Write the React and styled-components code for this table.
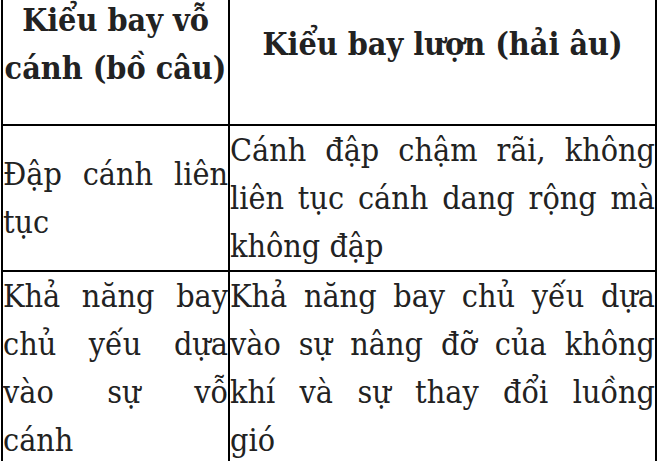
import React from 'react';
import styled, { createGlobalStyle } from 'styled-components';

const rows = [
  {
    left: ['Đập cánh liên', 'tục'],
    right: ['Cánh đập chậm rãi, không', 'liên tục cánh dang rộng mà', 'không đập'],
  },
  {
    left: ['Khả năng bay', 'chủ yếu dựa', 'vào sự vỗ', 'cánh'],
    right: ['Khả năng bay chủ yếu dựa', 'vào sự nâng đỡ của không', 'khí và sự thay đổi luồng', 'gió'],
  },
];

const Global = createGlobalStyle`
  body {
    margin: 0;
    background: #fff;
    overflow: hidden;
  }
`;

const Table = styled.div`
  display: grid;
  grid-template-columns: 227px 427px;
  margin-left: 1px;
  border-left: 2px solid #000;
  width: max-content;
  color: #222;
  font-family: "DejaVu Serif", serif;
  font-stretch: condensed;
  font-size: 32px;
  line-height: 48px;
`;

const Cell = styled.div`
  box-sizing: border-box;
  display: flex;
  flex-direction: column;
  justify-content: center;
  border-right: 2px solid #000;
  border-bottom: 2px solid #000;
`;

const HeaderCell = styled(Cell)`
  align-items: center;
  padding-bottom: 32px;
  text-align: center;
  font-weight: 700;
`;

const HeaderText = styled.div`
  margin-top: -4px;
`;

const Line = styled.span`
  display: block;
  text-align: justify;
  text-align-last: ${({ $last }) => ($last ? 'left' : 'justify')};
  white-space: nowrap;
`;

function Lines({ lines }) {
  return lines.map((line, i) => (
    <Line key={line} $last={i === lines.length - 1}>{line}</Line>
  ));
}

export default function App() {
  return (
    <>
      <Global />
      <Table>
        <HeaderCell>
          <HeaderText>
            Kiểu bay vỗ
            <br />
            cánh (bồ câu)
          </HeaderText>
        </HeaderCell>
        <HeaderCell>
          <HeaderText>Kiểu bay lượn (hải âu)</HeaderText>
        </HeaderCell>
        {rows.map((row) => (
          <React.Fragment key={row.left[0]}>
            <Cell><Lines lines={row.left} /></Cell>
            <Cell><Lines lines={row.right} /></Cell>
          </React.Fragment>
        ))}
      </Table>
    </>
  );
}
